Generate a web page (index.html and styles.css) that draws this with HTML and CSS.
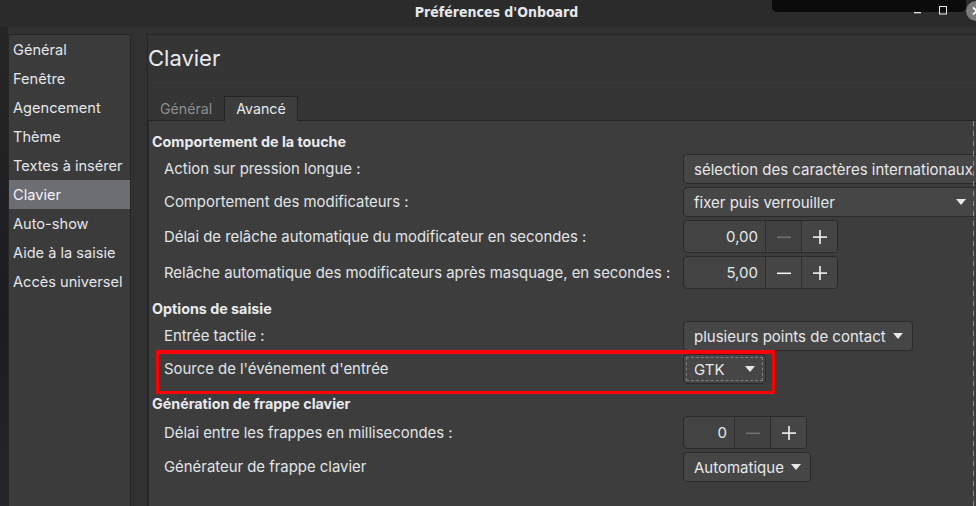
FILE: index.html
```html
<!DOCTYPE html>
<html lang="fr">
<head>
<meta charset="utf-8">
<title>Préférences d'Onboard</title>
<link rel="stylesheet" href="styles.css">
</head>
<body>
<div class="window">
  <header class="titlebar">
    <div class="title">Préférences d'Onboard</div>
    <div class="tooltip"></div>
    <div class="wm-buttons">
      <svg class="wm-min" width="9" height="14" viewBox="0 0 9 14"><rect x="1" y="12" width="7" height="1.3" fill="#e8e8e8"/></svg>
      <svg class="wm-max" width="10" height="10" viewBox="0 0 10 10"><rect x="1.5" y="1.5" width="7" height="7.5" fill="none" stroke="#e8e8e8" stroke-width="1"/></svg>
      <svg class="wm-close" width="12" height="22" viewBox="0 0 12 22"><circle cx="12" cy="11" r="10" fill="#7b7b7d"/><path d="M9 7.5 L13 11 L9 14.5" stroke="#ffffff" stroke-width="1.8" fill="none"/></svg>
    </div>
  </header>
  <div class="main">
    <div class="edge"></div>
    <nav class="sidebar">
      <div class="item">Général</div>
      <div class="item">Fenêtre</div>
      <div class="item">Agencement</div>
      <div class="item">Thème</div>
      <div class="item">Textes à insérer</div>
      <div class="item selected">Clavier</div>
      <div class="item">Auto-show</div>
      <div class="item">Aide à la saisie</div>
      <div class="item">Accès universel</div>
    </nav>
    <section class="content">
      <div class="page-title">Clavier</div>
      <div class="tabs">
        <div class="tab">Général</div>
        <div class="tab active">Avancé</div>
      </div>
      <div class="panel">
        <div class="heading first">Comportement de la touche</div>
        <div class="rows">
          <div class="row">
            <span class="label">Action sur pression longue :</span>
            <div class="combo combo-long"><span>sélection des caractères internationaux</span></div>
          </div>
          <div class="row">
            <span class="label">Comportement des modificateurs :</span>
            <div class="combo combo-fill"><span>fixer puis verrouiller</span><svg class="arrow" width="10" height="6" viewBox="0 0 10 6"><polygon points="0,0 10,0 5,6" fill="#e8e8e8"/></svg></div>
          </div>
          <div class="row">
            <span class="label">Délai de relâche automatique du modificateur en secondes :</span>
            <div class="spin">
              <div class="spin-entry wide">0,00</div>
              <div class="spin-btn disabled"><svg width="14" height="14" viewBox="0 0 14 14"><rect x="0" y="6.5" width="14" height="1.6" fill="currentColor"/></svg></div>
              <div class="spin-btn"><svg width="14" height="14" viewBox="0 0 14 14"><rect x="0" y="6.3" width="14" height="1.6" fill="currentColor"/><rect x="6.2" y="0" width="1.6" height="14" fill="currentColor"/></svg></div>
            </div>
          </div>
          <div class="row">
            <span class="label">Relâche automatique des modificateurs après masquage, en secondes :</span>
            <div class="spin">
              <div class="spin-entry wide">5,00</div>
              <div class="spin-btn"><svg width="14" height="14" viewBox="0 0 14 14"><rect x="0" y="6.5" width="14" height="1.6" fill="currentColor"/></svg></div>
              <div class="spin-btn"><svg width="14" height="14" viewBox="0 0 14 14"><rect x="0" y="6.3" width="14" height="1.6" fill="currentColor"/><rect x="6.2" y="0" width="1.6" height="14" fill="currentColor"/></svg></div>
            </div>
          </div>
        </div>

        <div class="heading">Options de saisie</div>
        <div class="rows">
          <div class="row">
            <span class="label">Entrée tactile :</span>
            <div class="combo"><span>plusieurs points de contact</span><svg class="arrow" width="10" height="6" viewBox="0 0 10 6"><polygon points="0,0 10,0 5,6" fill="#e8e8e8"/></svg></div>
          </div>
          <div class="row">
            <span class="label">Source de l'événement d'entrée</span>
            <div class="combo focused combo-gtk"><span>GTK</span><svg class="arrow" width="10" height="6" viewBox="0 0 10 6"><polygon points="0,0 10,0 5,6" fill="#e8e8e8"/></svg></div>
          </div>
        </div>

        <div class="heading">Génération de frappe clavier</div>
        <div class="rows">
          <div class="row">
            <span class="label">Délai entre les frappes en millisecondes :</span>
            <div class="spin">
              <div class="spin-entry narrow">0</div>
              <div class="spin-btn disabled"><svg width="14" height="14" viewBox="0 0 14 14"><rect x="0" y="6.5" width="14" height="1.6" fill="currentColor"/></svg></div>
              <div class="spin-btn"><svg width="14" height="14" viewBox="0 0 14 14"><rect x="0" y="6.3" width="14" height="1.6" fill="currentColor"/><rect x="6.2" y="0" width="1.6" height="14" fill="currentColor"/></svg></div>
            </div>
          </div>
          <div class="row">
            <span class="label">Générateur de frappe clavier</span>
            <div class="combo"><span>Automatique</span><svg class="arrow" width="10" height="6" viewBox="0 0 10 6"><polygon points="0,0 10,0 5,6" fill="#e8e8e8"/></svg></div>
          </div>
        </div>

        <div class="highlight"></div>
      </div>
    </section>
  </div>
</div>
</body>
</html>
```

FILE: styles.css
```css
* { box-sizing: border-box; }

html, body {
  margin: 0;
  padding: 0;
  width: 976px;
  height: 506px;
  overflow: hidden;
  background: #2b2b2b;
  font-family: Inter, "Noto Sans", "DejaVu Sans", sans-serif;
  font-size: 14px;
  color: #e3e5e8;
}

.window {
  width: 976px;
  height: 506px;
  display: flex;
  flex-direction: column;
}

/* ---------- title bar ---------- */
.titlebar {
  position: relative;
  height: 27px;
  flex: none;
  background: #2b2b2b;
  display: flex;
  align-items: center;
  justify-content: center;
  padding-left: 17px;
}

.title {
  font-family: "DejaVu Sans Condensed", "DejaVu Sans", sans-serif;
  font-stretch: condensed;
  font-weight: bold;
  font-size: 14px;
  color: #e6e8ec;
  line-height: 20px;
  margin-top: -4px;
}

.tooltip {
  position: absolute;
  top: 0;
  left: 772px;
  width: 194px;
  height: 12px;
  background: #0b0b0b;
  border-radius: 0 0 5px 5px;
}

.wm-buttons {
  position: absolute;
  top: 0;
  right: 0;
  height: 27px;
  display: flex;
  align-items: flex-start;
}

.wm-min { margin-top: 0; margin-right: 16px; }
.wm-max { margin-top: 5px; margin-right: 16px; }
.wm-close { margin-top: 0; }

/* ---------- main ---------- */
.main {
  flex: 1;
  display: flex;
  background: #313131;
  min-height: 0;
}

.edge {
  width: 8px;
  flex: none;
  background: linear-gradient(to bottom, #262626 0, #1b1c21 60%, #25262a 100%);
}

.sidebar {
  width: 123px;
  flex: none;
  margin-top: 7px;
  margin-right: 16px;
  background: #3b3b3b;
  border: 1px solid #262626;
  border-bottom: none;
  display: flex;
  flex-direction: column;
}

.item {
  height: 29px;
  line-height: 29px;
  padding-top: 1px;
  padding-left: 4px;
  font-size: 14.6px;
  color: #e3e6ea;
  white-space: nowrap;
}

.item.selected {
  background: #6c6e73;
  color: #f2f3f5;
}

/* ---------- content ---------- */
.content {
  flex: 1;
  margin-top: 7px;
  display: flex;
  flex-direction: column;
  background: #353535;
  border-top: 1px solid #262626;
  border-left: 1px solid #262626;
  min-width: 0;
}

.page-title {
  height: 48px;
  flex: none;
  line-height: 46px;
  font-size: 22px;
  color: #e8eaee;
  padding-left: 0;
  border-bottom: 1px solid #3a3a3a;
}

.tabs {
  height: 37px;
  flex: none;
  display: flex;
  align-items: flex-end;
  position: relative;
  z-index: 1;
}

.tab {
  height: 24px;
  line-height: 23px;
  padding: 0 11px;
  color: #8c8e91;
  font-size: 14.2px;
  border: 1px solid transparent;
  border-bottom: none;
}

.tab.active {
  background: #3d3d3d;
  color: #e8eaee;
  border-color: #242424;
  height: 25px;
  margin-bottom: -1px;
}

.panel {
  flex: 1;
  position: relative;
  overflow: hidden;
  background: #3d3d3d;
  border-top: 1px solid #242424;
  border-left: 1px solid #2a2a2a;
}

.panel::after {
  content: "";
  position: absolute;
  top: 0;
  bottom: 0;
  right: 2px;
  width: 1px;
  background: repeating-linear-gradient(to bottom, #8a8a8a 0, #8a8a8a 5px, #4a4a4a 5px, #4a4a4a 10px);
}

.heading {
  height: 32px;
  padding-top: 10px;
  padding-left: 3px;
  line-height: 20px;
  font-weight: bold;
  font-size: 14.3px;
  color: #e8eaee;
}

.heading.first {
  height: 33px;
  padding-top: 11px;
}

.rows {
  display: flex;
  flex-direction: column;
  gap: 3px;
}

.row {
  display: grid;
  grid-template-columns: 519px auto;
  align-items: center;
  padding-left: 15px;
  justify-items: start;
}

.label {
  white-space: nowrap;
  color: #e1e4e8;
  font-size: 14.9px;
}

/* ---------- combo ---------- */
.combo {
  height: 30px;
  display: inline-flex;
  align-items: center;
  gap: 7px;
  padding: 0 9px 0 10px;
  background: #464646;
  border: 1px solid #2a2a2a;
  border-radius: 4px;
  white-space: nowrap;
  color: #e6e8ec;
  font-size: 15px;
}

.combo .arrow { flex: none; }

.combo-long {
  width: 320px;
}

.combo-fill {
  width: 295px;
  justify-content: space-between;
  padding-right: 11px;
}

.combo-gtk {
  width: 83px;
  justify-content: space-between;
  padding-right: 10px;
}

.combo.focused {
  outline: 1px dashed #7d7d7d;
  outline-offset: -4px;
}

/* ---------- spin ---------- */
.spin {
  height: 33px;
  display: inline-flex;
  border: 1px solid #2a2a2a;
  border-radius: 4px;
  background: #434343;
  overflow: hidden;
}

.spin-entry {
  display: flex;
  align-items: center;
  justify-content: flex-end;
  padding-right: 7px;
  color: #e6e8ec;
  font-size: 15px;
}

.spin-entry.wide { width: 81px; }
.spin-entry.narrow { width: 50px; }

.spin-btn {
  width: 36px;
  display: flex;
  align-items: center;
  justify-content: center;
  border-left: 1px solid #2e2e2e;
  color: #eef0f2;
  background: #454545;
}

.spin-btn.disabled {
  color: #6f6f6f;
  background: #414141;
}

/* ---------- annotation ---------- */
.highlight {
  position: absolute;
  left: 7px;
  top: 229px;
  width: 619px;
  height: 44px;
  border: 3px solid #ff0000;
  border-top-width: 4px;
  pointer-events: none;
}
```
